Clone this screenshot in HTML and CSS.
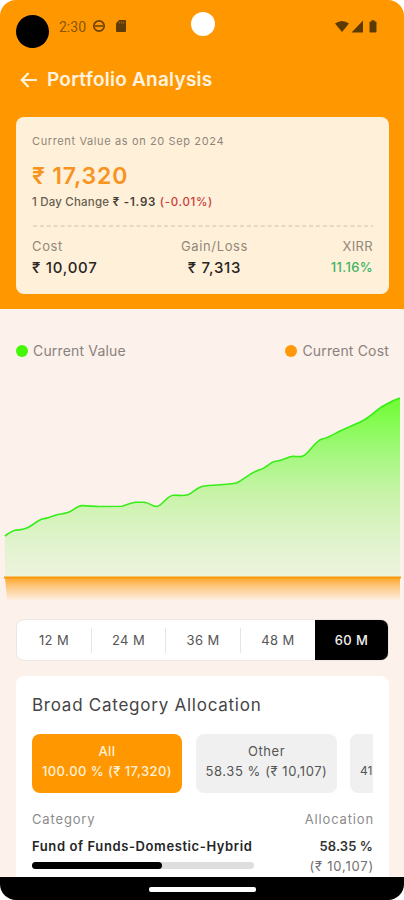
FILE: index.html
```html
<!DOCTYPE html>
<html lang="en">
<head>
<meta charset="utf-8">
<title>Portfolio Analysis</title>
<link rel="stylesheet" href="styles.css">
</head>
<body>
<div class="phone">
  <header class="header">
    <div class="status">
      <span class="recorder"></span>
      <span class="time">2:30</span>
      <svg class="ring" width="14" height="14" viewBox="0 0 14 14"><circle cx="7" cy="7" r="5.2"/><path d="M3 7h8"/></svg>
      <svg class="sd" width="10" height="12" viewBox="0 0 10 12"><path d="M3.2 0H9q1 0 1 1v10q0 1-1 1H1q-1 0-1-1V3.3z"/><path class="slots" d="M3.7 1.6v2M5.7 1.6v2M7.7 1.6v2"/></svg>
      <span class="camera"></span>
      <svg class="signals" width="43" height="14" viewBox="0 0 43 14"><path d="M0 3.6Q7 -1.8 14 3.6L7 12z"/><path d="M28 .5V12.500H16.500z"/><path d="M36.500 1.500V.3h3v1.200h1.200q.8 0 .8.8v9.400q0 .8-.8.8h-5.400q-.8 0-.8-.8V2.300q0-.8.8-.8z"/></svg>
    </div>
    <div class="titlebar">
      <svg width="18" height="18" viewBox="0 0 18 18"><path d="M17 9H2M8.500 2L1.800 9L8.500 16"/></svg>
      <h1>Portfolio Analysis</h1>
    </div>
    <section class="summary">
      <p class="asof">Current Value as on 20 Sep 2024</p>
      <p class="total">₹ 17,320</p>
      <p class="change"><span class="day">1 Day Change</span> <b>₹ -1.93</b> <span class="loss">(-0.01%)</span></p>
      <svg class="dash" width="341" height="2" viewBox="0 0 341 2"><path d="M1 1H341"/></svg>
      <div class="stats">
        <div><span class="label cost">Cost</span><span class="num">₹ 10,007</span></div>
        <div class="mid"><span class="label gain">Gain/Loss</span><span class="num">₹ 7,313</span></div>
        <div class="end"><span class="label xirr">XIRR</span><span class="num green">11.16%</span></div>
      </div>
    </section>
  </header>
  <main>
    <div class="legend">
      <span><i class="dot value"></i>Current Value</span>
      <span><i class="dot spent"></i>Current Cost</span>
    </div>
    <svg class="chart" width="404" height="230" viewBox="0 380 404 230">
      <defs>
        <linearGradient id="g" x1="0" y1="398" x2="0" y2="594" gradientUnits="userSpaceOnUse"><stop offset="0" stop-color="#6ffb32"/><stop offset=".1" stop-color="#80fc4c"/><stop offset=".3" stop-color="#a7f782"/><stop offset=".5" stop-color="#caf3ab"/><stop offset=".75" stop-color="#e2f3cf"/><stop offset="1" stop-color="#f3f4e5"/></linearGradient>
        <linearGradient id="o" x1="0" y1="577" x2="0" y2="601" gradientUnits="userSpaceOnUse"><stop offset="0" stop-color="#ffa526"/><stop offset=".45" stop-color="#fdcb8a"/><stop offset="1" stop-color="#fdf1e8"/></linearGradient>
      </defs>
      <path fill="url(#g)" d="M5 536C9 533 12 531 15 530.300C20 529.500 23 530.200 28 527.500C34 524.500 38 520 43 518.800C48 518.500 53 515.500 58 514.500C64 513.500 67 513.500 71 511C76 508 78 505.800 82 505.600C90 505.500 94 506.800 101 506.500L122 506.200C128 505 131 502.200 136 502.200H144C150 502.500 151 506.500 157 506.500C163 505 166 496.500 173 495.300C179 495 183 496.300 188 494.800C194 492 197 487 204 486C213 484.500 227 485.500 237 482.800C244 479 250 473 259 470C267 468 270 461.500 276 461.200C283 461 286 457 293 456.300C300 456.500 302 458 307 453C312 448 317 440 322 439C328 438 334 434 340 431C348 427 357 424 364 420C373 415 378 408 385 405Q393 400 400 398V577H5z"/>
      <path fill="url(#o)" d="M5 577H400V600H7z"/>
      <path class="line" d="M5 536C9 533 12 531 15 530.300C20 529.500 23 530.200 28 527.500C34 524.500 38 520 43 518.800C48 518.500 53 515.500 58 514.500C64 513.500 67 513.500 71 511C76 508 78 505.800 82 505.600C90 505.500 94 506.800 101 506.500L122 506.200C128 505 131 502.200 136 502.200H144C150 502.500 151 506.500 157 506.500C163 505 166 496.500 173 495.300C179 495 183 496.300 188 494.800C194 492 197 487 204 486C213 484.500 227 485.500 237 482.800C244 479 250 473 259 470C267 468 270 461.500 276 461.200C283 461 286 457 293 456.300C300 456.500 302 458 307 453C312 448 317 440 322 439C328 438 334 434 340 431C348 427 357 424 364 420C373 415 378 408 385 405Q393 400 400 398"/>
      <path class="base" d="M4 577.500H401"/>
    </svg>
    <div class="periods"><span>12 M</span><span>24 M</span><span>36 M</span><span>48 M</span><span class="on">60 M</span></div>
    <section class="alloc">
      <h2>Broad Category Allocation</h2>
      <div class="chips">
        <div class="chip all"><span>All</span><span class="amt">100.00 % (₹ 17,320)</span></div>
        <div class="chip other"><span>Other</span><span class="amt">58.35 % (₹ 10,107)</span></div>
        <div class="chip third"><span>&nbsp;</span><span class="amt">41</span></div>
      </div>
      <div class="row heads"><span class="cat">Category</span><span class="al">Allocation</span></div>
      <div class="row fund">
        <div><span class="name">Fund of Funds-Domestic-Hybrid</span><div class="track"><div class="fill"></div></div></div>
        <div class="right"><span class="pct">58.35 %</span><span class="rs">(₹ 10,107)</span></div>
      </div>
    </section>
  </main>
  <nav><span></span></nav>
</div>
</body>
</html>
```
FILE: styles.css
```css
* { box-sizing: border-box; }
body { margin: 0; background: #fff; font-family: Inter, "Noto Sans", sans-serif; font-size: 13px; line-height: 20px; color: #222; }
h1, h2, p { margin: 0; white-space: nowrap; }
svg { display: block; flex: none; }
.phone { width: 404px; height: 900px; border-radius: 16px; overflow: hidden; background: #fdf1eb; display: flex; flex-direction: column; }
.header { height: 309px; background: #ff9800; padding: 10px 15px 0 16px; flex: none; }
.status { height: 42px; display: flex; align-items: flex-start; color: #8a5508; }
.recorder { width: 33px; height: 33px; border-radius: 50%; background: #000; margin-top: 5px; }
.time { font-family: Roboto, sans-serif; font-size: 14px; margin: 7px 0 0 10px; width: 33px; }
.ring { margin-top: 9px; fill: none; stroke: #6b4108; stroke-width: 1.700; }
.sd { margin: 10px 0 0 10px; fill: #5e3b08; }
.slots { stroke: #c97a05; stroke-width: .8; fill: none; }
.camera { width: 24px; height: 24px; border-radius: 50%; background: #fff; margin: 2px 0 0 65px; }
.signals { margin: 10px 0 0 120px; fill: #5c3a05; }
.titlebar { height: 55px; display: flex; align-items: center; padding-left: 4px; color: #fff3e0; }
.titlebar svg { fill: none; stroke: #fff3e0; stroke-width: 2.200; }
.titlebar h1 { font-size: 19px; font-weight: 600; margin-left: 9px; letter-spacing: .25px; }
.summary { margin-top: 10px; height: 177px; border-radius: 8px; background: #fff0da; padding: 14px 16px 0; }
.asof { font-size: 11px; color: #8f8679; letter-spacing: .62px; }
.total { margin-top: 12px; height: 26px; line-height: 26px; font-size: 23px; font-weight: 600; color: #f8941d; letter-spacing: .8px; }
.change { margin-top: 3px; font-size: 11.500px; letter-spacing: .3px; }
.day { color: #665d50; font-weight: 500; letter-spacing: .2px; }
.change b { font-weight: 600; color: #443e35; letter-spacing: .8px; }
.loss { color: #c83c36; font-weight: 500; letter-spacing: .7px; }
.dash { margin-top: 13px; stroke: #cdc0ab; stroke-width: 1; stroke-dasharray: 4 2.900; }
.stats { display: grid; grid-template-columns: 1fr 1fr 1fr; margin-top: 9px; }
.stats div { display: flex; flex-direction: column; line-height: 21px; }
.stats .mid { align-items: center; padding-left: 24px; }
.stats .end { align-items: flex-end; }
.label { color: #918879; font-size: 13px; letter-spacing: .65px; }
.num { color: #29251f; font-size: 15px; font-weight: 500; letter-spacing: .75px; }
.xirr, .num.green { letter-spacing: .35px; }
.num.green { color: #3cb463; font-size: 13px; }
.legend { height: 71px; padding: 32px 15px 0 16px; display: flex; justify-content: space-between; color: #89827e; font-size: 14px; letter-spacing: .17px; }
.legend span { display: flex; align-items: center; height: 20px; }
.dot { width: 12px; height: 12px; border-radius: 50%; margin-right: 5px; }
.value { background: #44f706; }
.spent { background: #ff990a; }
.line { fill: none; stroke: #36ee18; stroke-width: 1.600; }
.base { stroke: #f79a10; stroke-width: 2; }
.periods { margin: 9px 15px 0 16px; height: 42px; border: 1px solid #ebe6e2; border-radius: 8px; overflow: hidden; background: #fff; display: grid; grid-template-columns: 75px 74px 75px 74px 1fr; align-items: center; text-align: center; color: #555; font-size: 13px; letter-spacing: .4px; }
.periods span { height: 25px; line-height: 25px; border-right: 1px solid #e5e5e5; }
.periods span:nth-child(4) { border: 0; }
.periods .on { height: 40px; line-height: 40px; border: 0; background: #000; color: #f2f2f2; font-weight: 500; }
.alloc { margin: 15px 15px 0 16px; height: 201px; padding: 19px 16px 0; background: #fff; border-radius: 8px 8px 0 0; }
h2 { font-size: 17px; font-weight: 400; color: #454545; letter-spacing: .75px; }
.chips { display: flex; gap: 14px; margin-top: 19px; overflow: hidden; }
.chip { height: 59px; flex: none; border-radius: 8px; background: #f0f0f0; color: #555; text-align: center; padding-top: 7px; font-size: 13px; white-space: nowrap; letter-spacing: .57px; }
.chip span { display: block; }
.all { width: 150px; background: #ff9800; color: #fff0da; font-weight: 500; letter-spacing: .45px; }
.other { width: 141px; }
.third { width: 141px; text-align: left; padding-left: 10px; margin-left: -1px; letter-spacing: 0; font-size: 12px; }
.row { display: flex; justify-content: space-between; }
.heads { margin-top: 16px; color: #8c8c8c; font-size: 13px; letter-spacing: .85px; }
.al { margin-right: -1px; }
.fund { margin-top: 7px; }
.name { display: block; font-size: 13px; font-weight: 600; color: #252525; white-space: nowrap; height: 18px; letter-spacing: .6px; }
.track { width: 222px; height: 7px; border-radius: 4px; background: #dedede; margin-top: 8px; }
.fill { width: 130px; height: 7px; border-radius: 4px; background: #000; }
.right { display: flex; flex-direction: column; align-items: flex-end; }
.pct { font-weight: 600; color: #333; letter-spacing: .1px; }
.rs { color: #707070; letter-spacing: .8px; margin-right: -1px; }
nav { height: 23px; background: #000; flex: none; display: flex; justify-content: center; padding-top: 10px; }
nav span { width: 107px; height: 5px; border-radius: 2px; background: #fff; }
```
